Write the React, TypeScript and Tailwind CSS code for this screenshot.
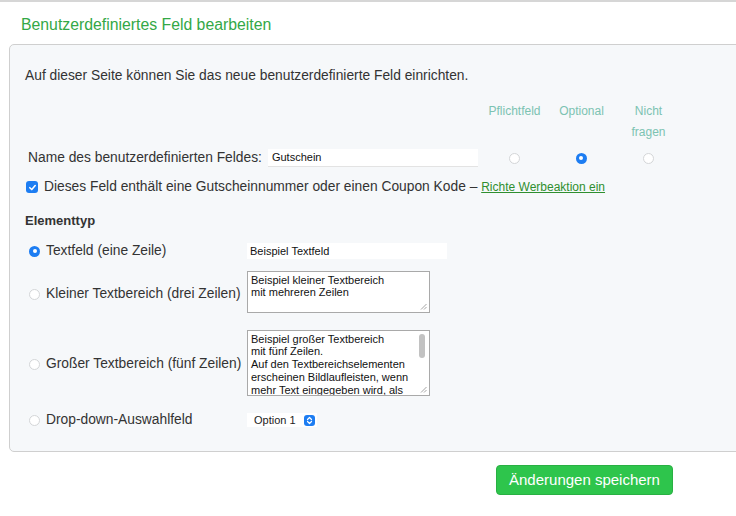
import React from "react";

function Radio({ checked = false }: { checked?: boolean }) {
  if (checked) {
    return (
      <span className="inline-flex h-[11px] w-[11px] shrink-0 items-center justify-center rounded-full bg-[#1d7df2]">
        <span className="h-[4px] w-[4px] rounded-full bg-white" />
      </span>
    );
  }
  return <span className="inline-block h-[11px] w-[11px] shrink-0 rounded-full border border-[#d4d6d8] bg-white" />;
}

function Checkbox() {
  return (
    <span className="inline-flex h-[12px] w-[12px] shrink-0 items-center justify-center rounded-[3px] bg-[#1d7df2]">
      <svg width="9" height="9" viewBox="0 0 10 10" fill="none">
        <path d="M2 5.2 L4.2 7.3 L8 2.8" stroke="white" strokeWidth="1.7" strokeLinecap="round" strokeLinejoin="round" />
      </svg>
    </span>
  );
}

function Grip() {
  return (
    <svg className="absolute bottom-[2px] right-[2px]" width="7" height="7" viewBox="0 0 7 7">
      <path d="M6.5 1 L1 6.5 M6.5 4 L4 6.5" stroke="#9a9a9a" strokeWidth="0.9" />
    </svg>
  );
}

const areaCls =
  "relative w-[183px] overflow-hidden border border-[#a9a9a9] bg-white px-[3px] pt-[2px] text-[11px] leading-[12.7px] text-[#111]";

export default function App() {
  return (
    <div className="h-[516px] w-[736px] overflow-hidden bg-white font-['Liberation_Sans',Arial,sans-serif] text-[13.8px] text-[#333]">
      <div className="w-[770px] border-t-2 border-[#d6d6d6]">
        <h1 className="pl-[21px] pt-[13px] text-[15.8px] leading-[20px] text-[#33a846]">
          Benutzerdefiniertes Feld bearbeiten
        </h1>

        <div className="ml-[9px] mt-[9px] rounded-l-[5px] border border-[#cfcfcf] bg-[#f6f8fa] pb-[21px] pl-[15px] pt-[21px]">
          <p className="leading-[20px]">Auf dieser Seite können Sie das neue benutzerdefinierte Feld einrichten.</p>

          {/* column headers */}
          <div className="mt-[15px] flex pl-[456px] text-[12px] leading-[21px] text-[#7cc3b2]">
            <div className="w-[67px] text-center">Pflichtfeld</div>
            <div className="w-[67px] text-center">Optional</div>
            <div className="w-[67px] text-center">
              Nicht
              <br />
              fragen
            </div>
          </div>

          {/* name row */}
          <div className="mt-[6px] flex h-[18px] items-center">
            <span className="pl-[3px]">Name des benutzerdefinierten Feldes:</span>
            <div className="ml-[6px] flex h-[18px] w-[210px] items-center border-b border-[#e3e3e3] bg-white pl-[4px] text-[11px] text-[#111]">
              Gutschein
            </div>
            <div className="ml-[3px] flex w-[67px] justify-center">
              <Radio />
            </div>
            <div className="flex w-[67px] justify-center">
              <Radio checked />
            </div>
            <div className="flex w-[67px] justify-center">
              <Radio />
            </div>
          </div>

          {/* coupon checkbox */}
          <div className="mt-[10px] flex h-[20px] items-center gap-[6px] pl-[1px]">
            <Checkbox />
            <span>
              Dieses Feld enthält eine Gutscheinnummer oder einen Coupon Kode –{" "}
              <a className="text-[12px] text-[#2f8f2f] underline">Richte Werbeaktion ein</a>
            </span>
          </div>

          <h2 className="mt-[14px] text-[13px] font-bold leading-[20px]">Elementtyp</h2>

          <div className="mt-[10px] grid grid-cols-[218px_1fr] items-center gap-y-[9px] pl-[4px]">
            <label className="flex items-center gap-[6px]">
              <Radio checked />
              Textfeld (eine Zeile)
            </label>
            <div className="flex h-[16px] w-[200px] items-center bg-white pl-[3px] text-[11px] text-[#111]">
              Beispiel Textfeld
            </div>

            <label className="flex items-center gap-[6px] pt-[6px]">
              <Radio />
              Kleiner Textbereich (drei Zeilen)
            </label>
            <div className={`${areaCls} h-[42px]`}>
              Beispiel kleiner Textbereich
              <br />
              mit mehreren Zeilen
              <Grip />
            </div>

            <label className="mt-[8px] flex items-center gap-[6px] pt-[4px]">
              <Radio />
              Großer Textbereich (fünf Zeilen)
            </label>
            <div className={`${areaCls} mt-[8px] h-[66px] pr-[14px]`}>
              Beispiel großer Textbereich
              <br />
              mit fünf Zeilen.
              <br />
              Auf den Textbereichselementen erscheinen Bildlaufleisten, wenn mehr Text eingegeben wird, als
              <span className="absolute right-[4px] top-[3px] h-[24px] w-[6px] rounded-full bg-[#c2c2c2]" />
              <Grip />
            </div>

            <label className="mt-[5px] flex items-center gap-[6px]">
              <Radio />
              Drop-down-Auswahlfeld
            </label>
            <div className="mt-[5px] flex h-[14px] w-[70px] items-center justify-between bg-white pl-[7px] pr-[2px] text-[11px] text-[#222]">
              Option 1
              <span className="flex h-[11px] w-[11px] items-center justify-center rounded-[3px] bg-[#1d7df2]">
                <svg width="7" height="9" viewBox="0 0 7 9" fill="none">
                  <path d="M1.5 3.5 L3.5 1.5 L5.5 3.5 M1.5 5.5 L3.5 7.5 L5.5 5.5" stroke="white" strokeWidth="1.2" strokeLinecap="round" strokeLinejoin="round" />
                </svg>
              </span>
            </div>
          </div>
        </div>

        <div className="mt-[13px] pl-[496px]">
          <button className="h-[30px] w-[177px] rounded-[4px] border border-[#29b043] bg-[#2ec54c] text-[15px] text-white">
            Änderungen speichern
          </button>
        </div>
      </div>
    </div>
  );
}
